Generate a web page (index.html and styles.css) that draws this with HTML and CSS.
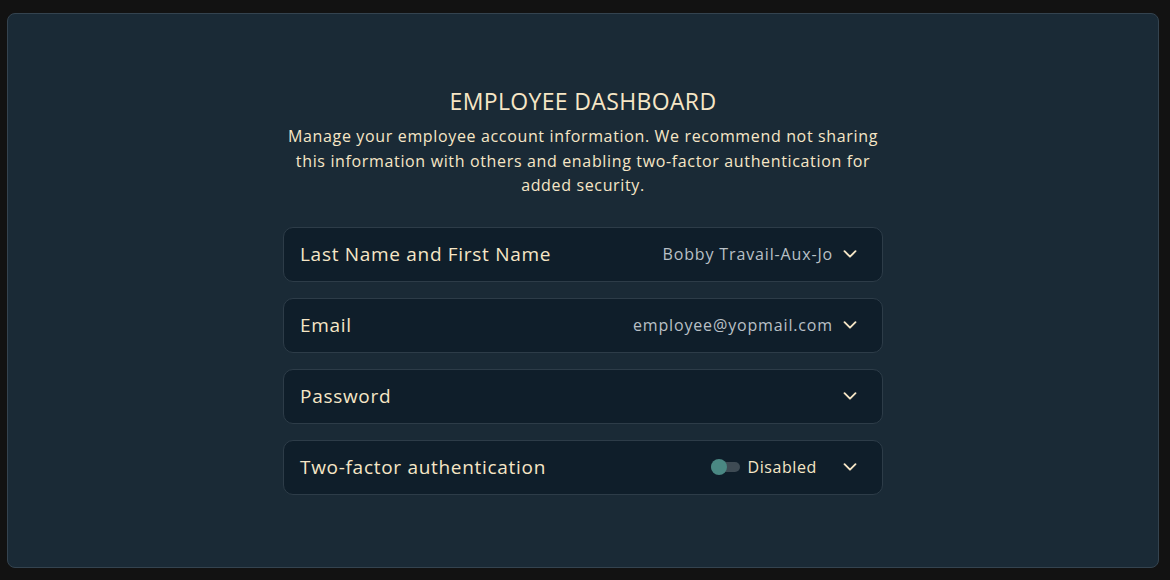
FILE: index.html
```html
<!DOCTYPE html>
<html>
<head>
<meta charset="utf-8">
<link rel="stylesheet" href="styles.css">
</head>
<body>
<main class="panel">
  <section class="content">
    <h1 class="title">EMPLOYEE DASHBOARD</h1>
    <p class="intro">Manage your employee account information. We recommend not sharing this information with others and enabling two-factor authentication for added security.</p>
    <div class="list">
      <div class="row">
        <span class="label">Last Name and First Name</span>
        <span class="right"><span class="value">Bobby Travail-Aux-Jo</span><svg class="chev" viewBox="0 0 16 16"><path d="M2.5 5.2L8 10.7l5.5-5.5"/></svg></span>
      </div>
      <div class="row">
        <span class="label">Email</span>
        <span class="right"><span class="value">employee@yopmail.com</span><svg class="chev" viewBox="0 0 16 16"><path d="M2.5 5.2L8 10.7l5.5-5.5"/></svg></span>
      </div>
      <div class="row">
        <span class="label">Password</span>
        <span class="right"><svg class="chev" viewBox="0 0 16 16"><path d="M2.5 5.2L8 10.7l5.5-5.5"/></svg></span>
      </div>
      <div class="row">
        <span class="label">Two-factor authentication</span>
        <span class="right"><span class="toggle"><span class="knob"></span></span><span class="status">Disabled</span><svg class="chev chev-wide" viewBox="0 0 16 16"><path d="M2.5 5.2L8 10.7l5.5-5.5"/></svg></span>
      </div>
    </div>
  </section>
</main>
</body>
</html>
```
FILE: styles.css
```css
html, body {
  margin: 0;
  padding: 0;
  background: #121212;
  height: 100%;
}
body {
  box-sizing: border-box;
  padding: 13px 11px 12px 7px;
  font-family: "Open Sans", "Noto Sans", sans-serif;
  color: #f6e6c6;
}
.panel {
  box-sizing: border-box;
  height: 555px;
  background: #1a2a36;
  border: 1px solid #34434f;
  border-radius: 8px;
  display: flex;
  justify-content: center;
}
.content {
  width: 600px;
  padding-top: 71px;
  display: flex;
  flex-direction: column;
  align-items: center;
}
.title {
  margin: 0;
  font-weight: 400;
  font-size: 23px;
  line-height: 32px;
  letter-spacing: 0.35px;
  color: #f6e6c6;
}
.intro {
  margin: 7px 0 0;
  width: 600px;
  text-align: center;
  font-size: 16px;
  line-height: 24.5px;
  letter-spacing: 0.65px;
  color: #f6e6c6;
}
.list {
  margin-top: 29px;
  width: 600px;
  display: flex;
  flex-direction: column;
  gap: 16px;
}
.row {
  box-sizing: border-box;
  height: 55px;
  padding: 0 24px 0 16px;
  background: #0f1e2a;
  border: 1px solid #2d3c48;
  border-radius: 10px;
  display: flex;
  align-items: center;
  justify-content: space-between;
}
.label {
  font-size: 19px;
  letter-spacing: 0.7px;
  color: #f6e6c6;
}
.right {
  display: flex;
  align-items: center;
}
.value {
  font-size: 16px;
  letter-spacing: 0.85px;
  color: #b9c0c6;
}
.chev {
  width: 16px;
  height: 16px;
  margin-left: 9px;
  fill: none;
  stroke: #f6e6c6;
  stroke-width: 1.9;
  stroke-linecap: round;
  stroke-linejoin: round;
}
.chev-wide {
  margin-left: 25px;
}
.toggle {
  position: relative;
  width: 29px;
  height: 10px;
  border-radius: 5px;
  background: #3e4b54;
  margin-right: 7px;
}
.knob {
  position: absolute;
  left: 0;
  top: -3px;
  width: 16px;
  height: 16px;
  border-radius: 50%;
  background: #4a8883;
}
.status {
  font-size: 16px;
  letter-spacing: 0.6px;
  color: #f6e6c6;
}
```
